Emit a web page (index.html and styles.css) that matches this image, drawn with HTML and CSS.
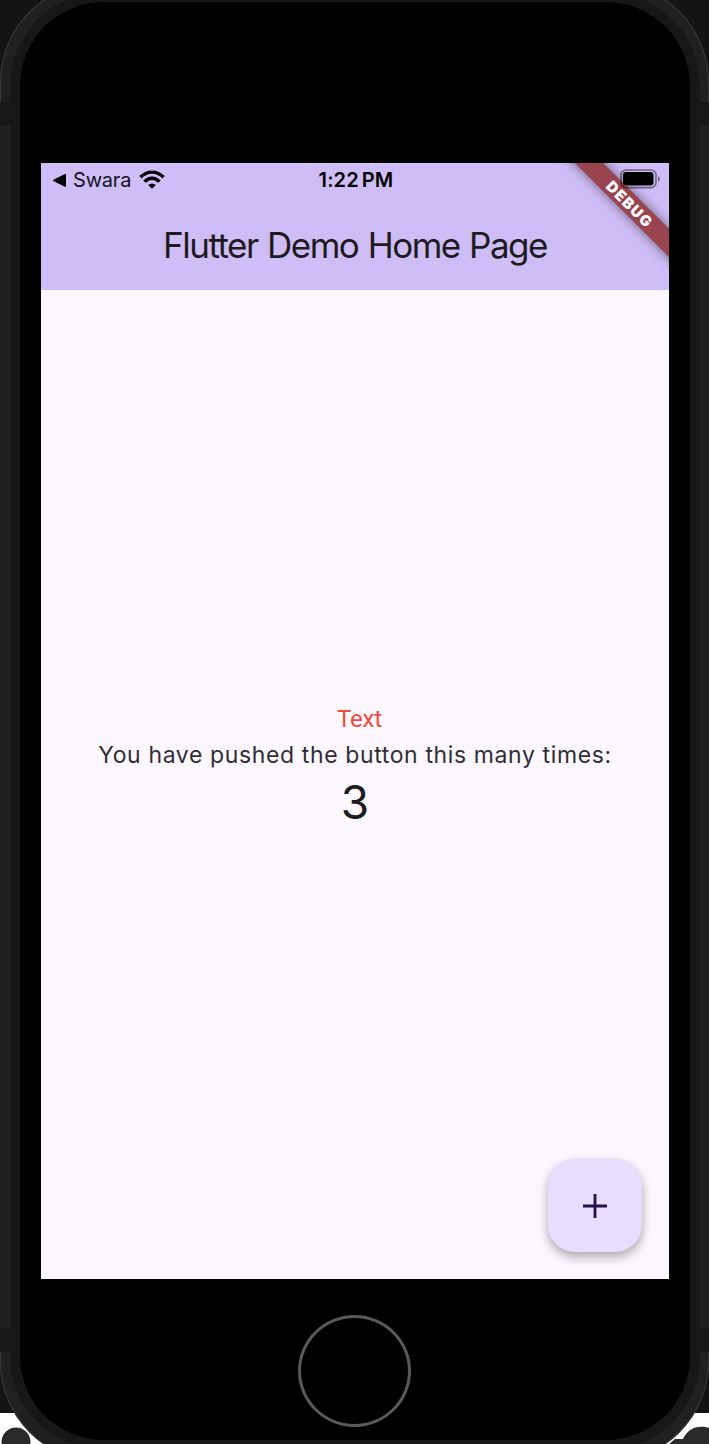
FILE: index.html
```html
<!DOCTYPE html>
<html lang="en">
<head>
<meta charset="utf-8">
<title>Flutter Demo</title>
<link rel="stylesheet" href="styles.css">
</head>
<body>
<div class="stage">
  <svg class="frame" viewBox="0 0 709 1444" aria-hidden="true">
    <rect width="709" height="1413" fill="#141414"/>
    <rect y="1413" width="709" height="31" fill="#fff"/>
    <circle cx="16" cy="1442" r="14.5" fill="#2a2a2a"/>
    <path d="M675 1439h8c7-14 19-13 26-11v16h-40z" fill="#2a2a2a"/>
    <rect x=".5" y="-17.5" width="708" height="1479" rx="100" fill="#202020" stroke="#363636" stroke-width="1.2"/>
    <rect y="125" width="3" height="1203" fill="#202020"/>
    <rect x="706" y="125" width="3" height="1203" fill="#202020"/>
    <rect y="102" width="709" height="23" fill="#171717"/>
    <rect y="1328" width="709" height="24" fill="#171717"/>
    <rect x="10" y="-8" width="690" height="1458" rx="94" fill="#171717"/>
    <rect x="20" y="2" width="670" height="1438" rx="84" fill="#000"/>
  </svg>
  <main class="screen">
    <header class="appbar">
      <div class="status">
        <div class="back">
          <svg class="arrow" viewBox="0 0 14 13"><path d="M.8 5.6 12 .1q1-.4 1 .7v11.3q0 1.2-1 .7L.8 7.3q-1.2-.9 0-1.7z"/></svg>
          <span class="app">Swara</span>
          <svg class="wifi" viewBox="0 0 26 19"><g fill="none" stroke="#000" stroke-width="3.4"><path d="M1.4 7.2Q6.5 2.1 13 2.1t11.6 5.1"/><path d="M5.5 11.6Q9 8.2 13 8.2t7.5 3.4"/></g><path d="M9.2 14.9q3.8-3 7.6 0L13 18.8z"/></svg>
        </div>
        <span class="time">1:22 PM</span>
        <svg class="battery" viewBox="0 0 40 20"><rect x="1" y="1" width="35" height="17.6" rx="5" fill="none" stroke="#000" stroke-opacity=".48" stroke-width="1.6"/><rect x="3" y="3" width="30.5" height="13.4" rx="3"/><path d="M38 7q1.8 1 1.8 3T38 13z" opacity=".5"/></svg>
      </div>
      <h1 class="title">Flutter Demo Home Page</h1>
      <div class="banner">DEBUG</div>
    </header>
    <section class="content">
      <p class="label">Text</p>
      <p class="message">You have pushed the button this many times:</p>
      <p class="count">3</p>
    </section>
    <button class="fab" aria-label="Increment"><svg viewBox="0 0 24 24"><path d="M10.6 0h2.8v10.6H24v2.8H13.4V24h-2.8V13.4H0v-2.8h10.6z"/></svg></button>
  </main>
  <div class="home"></div>
</div>
</body>
</html>
```
FILE: styles.css
```css
* { box-sizing: border-box; }
body { margin: 0; background: #141414; font-family: Inter, "Liberation Sans", sans-serif; }
h1, p { margin: 0; font-weight: 400; white-space: nowrap; }
svg { display: block; }
.stage { position: relative; width: 709px; height: 1444px; overflow: hidden; display: flex; flex-direction: column; padding: 163px 40px 0 41px; }
.frame { position: absolute; inset: 0; width: 709px; height: 1444px; }
.screen { position: relative; height: 1116px; flex: none; display: flex; flex-direction: column; background: #fdf8ff; }
.appbar { position: relative; height: 127px; flex: none; overflow: hidden; background: #cfbdf7; }
.status { position: relative; z-index: 1; display: grid; grid-template-columns: 1fr auto 1fr; align-items: center; height: 34px; padding: 0 9px 0 12px; }
.back { display: flex; align-items: center; }
.arrow { width: 14px; height: 13px; margin-right: 6px; }
.app { font-size: 20px; line-height: 24px; letter-spacing: -.2px; color: #17131d; }
.wifi { width: 26px; height: 19px; margin: -1px 0 0 8px; }
.time { font-size: 20px; line-height: 24px; font-weight: 600; letter-spacing: .1px; word-spacing: -2px; margin-left: -1px; }
.battery { width: 40px; height: 20px; justify-self: end; margin-top: -2px; }
.title { padding-top: 26px; text-align: center; font-size: 35px; line-height: 44px; letter-spacing: -1.5px; word-spacing: 1px; font-variant-ligatures: none; color: #1d1b20; }
.banner { position: absolute; left: 493px; top: 30px; width: 190px; height: 20px; padding-left: 3px; transform: rotate(45deg); display: flex; align-items: center; justify-content: center; background: #99444f; box-shadow: 0 0 12px rgba(0,0,0,.5); color: #fff; font-size: 15px; font-weight: 900; letter-spacing: 1.4px; }
.content { flex: 1; display: flex; flex-direction: column; align-items: center; padding-top: 412px; }
.label { font: 24px/34px Roboto, sans-serif; letter-spacing: -.2px; color: #ef4b3c; padding-left: 9px; }
.message { font-size: 23px; line-height: 38px; letter-spacing: .62px; color: #302d34; }
.count { font-size: 46px; line-height: 56px; color: #1d1b20; }
.fab { position: absolute; right: 27px; bottom: 27px; width: 94px; height: 93px; border: 0; padding: 0; border-radius: 27px; display: flex; align-items: center; justify-content: center; background: #e8ddfc; box-shadow: 0 6px 12px rgba(0,0,0,.22), 0 3px 9px rgba(0,0,0,.13); }
.fab svg { width: 24px; height: 24px; fill: #24104e; }
.home { position: relative; align-self: center; left: -1px; width: 113px; height: 112px; margin-top: 36px; border: 3.5px solid #5a5a5a; border-radius: 50%; }
```
